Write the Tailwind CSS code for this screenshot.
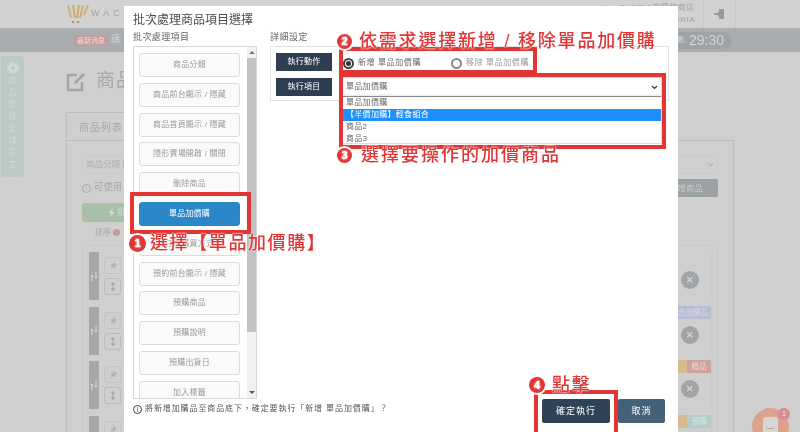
<!DOCTYPE html>
<html lang="zh-Hant">
<head>
<meta charset="UTF-8">
<title>批次處理商品項目選擇</title>
<script src="https://cdn.jsdelivr.net/npm/@tailwindcss/browser@4"></script>
</head>
<body class="m-0 bg-[#cfcfcf]">
<div class="relative w-[800px] h-[432px] overflow-hidden font-['Liberation_Sans','Noto_Sans_CJK_TC',sans-serif] blur-[0.35px]">

  <!-- page behind the modal -->
  <div class="flex flex-col h-full bg-[#cfcfcf]">
    <header class="h-[28px] flex items-center bg-[#d2d2d2] pl-[67px] shrink-0">
      <svg width="22" height="22" viewBox="0 0 22 22" fill="none">
        <path d="M1 2l3 13M6 2l2 13M12 2l-2 13M16 2l-3 13M21 2l-4 10" stroke="#cfae72" stroke-width="2"/>
        <circle cx="6" cy="19" r="1.2" fill="#c98a6f"/><circle cx="11" cy="19" r="1.2" fill="#c98a6f"/>
      </svg>
      <span class="ml-[2px] text-[9px] tracking-[4px] text-[#a2a2a2]">WACA</span>
      <div class="ml-auto flex items-center h-full">
        <div class="w-[18px] h-[18px] rounded-full border border-[#c2c2c2] mr-[6px]"></div>
        <div class="w-[84px] text-[8px] leading-[12px] text-[#a2a2a2] tracking-[0.5px]">
          <div>GLORIA的購物商店</div>
          <div class="text-right pr-[8px]">GLORIA</div>
        </div>
        <div class="w-[32px] h-full border-l border-[#c9c9c9] flex items-center justify-center">
          <svg width="11" height="12" viewBox="0 0 11 12"><path d="M5 1h5v10H5zM0 5h4V3l3 3-3 3V7H0z" fill="#9a9a9a"/></svg>
        </div>
        <div class="w-[65px] h-full border-l border-[#c9c9c9]"></div>
      </div>
    </header>
    <div class="h-[24px] bg-[#a9adb0] flex items-center pl-[74px] shrink-0">
      <span class="h-[11px] w-[34px] rounded-[2px] bg-[#c99a9a] text-[7px] leading-[11px] text-center text-[#e6dede]">最新消息</span>
      <span class="ml-[3px] text-[9px] text-[#d8d8d8]">請</span>
      <div class="ml-auto mr-[68px] h-[17px] w-[70px] rounded-full bg-[#9fa3a6] flex items-center justify-end pr-[8px] text-[#d4d6d7]">
        <span class="text-[7px] mr-[3px]">數:</span>
        <span class="text-[14px] leading-none">29:30</span>
      </div>
    </div>
    <div class="flex flex-1 min-h-0">
      <aside class="ml-px mt-[4px] w-[23px] h-[121px] rounded-r-[3px] bg-[#bccac6] flex flex-col items-center pt-[6px] text-[#d0dbd8] text-[8px] leading-[12px] shrink-0">
        <svg width="12" height="12" viewBox="0 0 12 12" class="mb-[1px]"><circle cx="6" cy="6" r="3.5" fill="none" stroke="#d0dbd8" stroke-width="3"/><circle cx="6" cy="6" r="5.6" fill="none" stroke="#d0dbd8" stroke-width="1.2" stroke-dasharray="1.8 1.8"/></svg>
        <span>商</span><span>品</span><span>登</span><span>錄</span><span>全</span><span>域</span><span>設</span><span>定</span>
      </aside>
      <main class="ml-[42px] w-[668px] flex flex-col">
        <div class="h-[60px] pt-[18px] flex items-start shrink-0">
          <svg width="21" height="21" viewBox="0 0 21 21" fill="none" class="mt-px"><path d="M16 11v8H2V4h9" stroke="#a3a5a7" stroke-width="2.4"/><path d="M8 13l1-3 8-8 2 2-8 8z" fill="#a3a5a7"/></svg>
          <span class="ml-[9px] text-[19px] leading-[22px] tracking-[1px] text-[#a8a8a8]">商品</span>
        </div>
        <div class="h-[28px] w-[260px] border-l border-t border-[#bdbdbd] pl-[12px] pt-[7px] text-[10px] tracking-[1px] text-[#a8a8a8] shrink-0">商品列表</div>
        <section class="flex-1 border border-[#bdbdbd] border-b-0 px-[15px] pt-[14px] flex flex-col">
          <div class="h-[19px] shrink-0 border border-[#c8c8c8] flex items-center justify-between pl-[3px] pr-[3px] text-[8.5px] text-[#adadad]">
            <span>商品分類 (</span>
            <svg width="7" height="5" viewBox="0 0 7 5" fill="none"><path d="M1 1l2.5 3L6 1" stroke="#a8a8a8"/></svg>
          </div>
          <div class="h-[18px] shrink-0 mt-[5px] flex items-center justify-between">
            <span class="flex items-center text-[9px] tracking-[0.5px] text-[#a8a8a8]">
              <span class="w-[9px] h-[9px] rounded-full border border-[#a8a8a8] text-[6px] leading-[7px] text-center mr-[3px]">i</span>可使用
            </span>
            <span class="w-[60px] h-[18px] rounded-[2px] bg-[#9ba0a3] text-[8.5px] leading-[18px] text-right pr-[15px] text-[#c9cccd]">增商品</span>
          </div>
          <div class="h-[19px] w-[60px] shrink-0 mt-[6px] rounded-[3px] bg-[#a9bfa9] flex items-center pl-[26px] text-[9px] text-[#d3ddd3]">
            <svg width="7" height="9" viewBox="0 0 7 9" class="mr-[2px]"><path d="M5 0L0 5h3L2 9l5-5H4z" fill="#d3ddd3"/></svg>批
          </div>
          <div class="h-[16px] shrink-0 mt-[3px] pl-[13px] text-[8px] leading-[16px] text-[#a8a8a8]">排序 <span class="inline-block w-[7px] h-[7px] rounded-full bg-[#c99a9a] align-[-0.5px]"></span></div>
          <div class="mt-[4px] border border-[#c9c9c9] pl-[6px] pr-[5px] pt-[6px] flex flex-col gap-[6.7px]">
            <div class="relative h-[48px] flex items-center gap-[5px] border-r border-[#cacaca]">
              <div class="w-[10px] h-full bg-[#a5a8aa] flex items-center justify-center">
                <svg width="8" height="9" viewBox="0 0 8 9" fill="none" stroke="#d6d6d6"><path d="M2 3v6M0.5 4.5L2 3l1.500 1.500M6 0v6M4.500 4.500L6 6l1.500-1.500"/></svg>
              </div>
              <div class="flex flex-col gap-[4px]">
                <div class="w-[17px] h-[17px] border border-[#c4c4c4] rounded-[3px] flex items-center justify-center">
                  <svg width="9" height="9" viewBox="0 0 9 9"><path d="M5 0l4 4-1 .5-1.500 1.500V8L4.500 6 1 9l3-3.500-2-2h2L5.500 2z" fill="#b4b4b4"/></svg>
                </div>
                <div class="w-[17px] h-[17px] border border-[#bcbcbc] rounded-[3px] flex items-center justify-center">
                  <svg width="6" height="9" viewBox="0 0 6 9"><path d="M3 0l2.500 2.500h-2v4h2L3 9 .5 6.500h2v-4h-2z" fill="#a4a4a4"/></svg>
                </div>
              </div>
              <div class="ml-auto mr-[12px] mt-[8px] w-[18px] h-[18px] rounded-full bg-[#a2a5a7] text-[#d6d6d6] text-[9px] leading-[18px] text-center font-bold">✕</div>
            </div>
            <div class="relative h-[48px] flex items-center gap-[5px] border-r border-[#cacaca]">
              <div class="w-[10px] h-full bg-[#a5a8aa] flex items-center justify-center">
                <svg width="8" height="9" viewBox="0 0 8 9" fill="none" stroke="#d6d6d6"><path d="M2 3v6M0.5 4.5L2 3l1.500 1.500M6 0v6M4.500 4.500L6 6l1.500-1.500"/></svg>
              </div>
              <div class="flex flex-col gap-[4px]">
                <div class="w-[17px] h-[17px] border border-[#c4c4c4] rounded-[3px] flex items-center justify-center">
                  <svg width="9" height="9" viewBox="0 0 9 9"><path d="M5 0l4 4-1 .5-1.500 1.500V8L4.500 6 1 9l3-3.500-2-2h2L5.500 2z" fill="#b4b4b4"/></svg>
                </div>
                <div class="w-[17px] h-[17px] border border-[#bcbcbc] rounded-[3px] flex items-center justify-center">
                  <svg width="6" height="9" viewBox="0 0 6 9"><path d="M3 0l2.500 2.500h-2v4h2L3 9 .5 6.500h2v-4h-2z" fill="#a4a4a4"/></svg>
                </div>
              </div>
              <div class="ml-auto mr-[12px] mt-[8px] w-[18px] h-[18px] rounded-full bg-[#a2a5a7] text-[#d6d6d6] text-[9px] leading-[18px] text-center font-bold">✕</div>
              <span class="absolute right-0 -top-[1px] w-[40px] h-[13px] bg-[#b9bdd4] text-[7.5px] leading-[13px] text-right pr-[3px] text-[#d5d7e4]">合加購品</span>
            </div>
            <div class="relative h-[48px] flex items-center gap-[5px] border-r border-[#cacaca]">
              <div class="w-[10px] h-full bg-[#a5a8aa] flex items-center justify-center">
                <svg width="8" height="9" viewBox="0 0 8 9" fill="none" stroke="#d6d6d6"><path d="M2 3v6M0.5 4.5L2 3l1.500 1.500M6 0v6M4.500 4.500L6 6l1.500-1.500"/></svg>
              </div>
              <div class="flex flex-col gap-[4px]">
                <div class="w-[17px] h-[17px] border border-[#c4c4c4] rounded-[3px] flex items-center justify-center">
                  <svg width="9" height="9" viewBox="0 0 9 9"><path d="M5 0l4 4-1 .5-1.500 1.500V8L4.500 6 1 9l3-3.500-2-2h2L5.500 2z" fill="#b4b4b4"/></svg>
                </div>
                <div class="w-[17px] h-[17px] border border-[#bcbcbc] rounded-[3px] flex items-center justify-center">
                  <svg width="6" height="9" viewBox="0 0 6 9"><path d="M3 0l2.500 2.500h-2v4h2L3 9 .5 6.500h2v-4h-2z" fill="#a4a4a4"/></svg>
                </div>
              </div>
              <div class="ml-auto mr-[12px] mt-[8px] w-[18px] h-[18px] rounded-full bg-[#a2a5a7] text-[#d6d6d6] text-[9px] leading-[18px] text-center font-bold">✕</div>
              <span class="absolute right-0 -top-[1px] flex h-[13px] text-[7.5px] leading-[13px] text-center text-[#e2dcd6]">
                <span class="w-[10px] bg-[#d6bb8f]"></span><span class="w-[24px] bg-[#cfa39b]">贈品</span>
              </span>
            </div>
            <div class="relative h-[48px] flex items-center gap-[5px] border-r border-[#cacaca]">
              <div class="w-[10px] h-full bg-[#a5a8aa]"></div>
              <div class="self-start mt-[5px] w-[17px] h-[17px] border border-[#c4c4c4] rounded-[3px] flex items-center justify-center">
                <svg width="9" height="9" viewBox="0 0 9 9"><path d="M5 0l4 4-1 .5-1.500 1.500V8L4.500 6 1 9l3-3.500-2-2h2L5.500 2z" fill="#b4b4b4"/></svg>
              </div>
              <span class="absolute right-0 -top-[1px] flex h-[13px] text-[7.5px] leading-[13px] text-center text-[#d7e2de]">
                <span class="w-[10px] bg-[#d6bb8f]"></span><span class="w-[24px] bg-[#b4cdc8]">預購</span>
              </span>
            </div>
          </div>
        </section>
      </main>
    </div>
  </div>

  <!-- chat bubble -->
  <div class="absolute left-[752px] top-[408px] w-[37px] h-[37px] rounded-full bg-[#dda28e] flex justify-center pt-[9px]">
    <div class="w-[15px] h-[18px] rounded-[3px] bg-[#d6d6d6] flex justify-center pt-[9px]">
      <div class="w-[9px] h-[3px] border-b border-[#c99a8a] rounded-b-full"></div>
    </div>
  </div>
  <div class="absolute left-[778px] top-[408px] w-[12px] h-[12px] rounded-full bg-[#d98c94] text-[7px] leading-[12px] text-center text-[#eee]">1</div>

  <!-- modal -->
  <div class="absolute left-[124px] top-[6px] w-[554px] h-[426px] bg-white px-[9px] flex flex-col">
    <h2 class="mt-[6px] h-[16px] text-[12px] leading-[16px] font-normal text-[#4d4d4d]">批次處理商品項目選擇</h2>
    <div class="flex flex-1 min-h-0 mt-[1px]">
      <div class="w-[124px] shrink-0 flex flex-col">
        <div class="h-[17px] text-[9px] leading-[17px] tracking-[0.4px] text-[#666]">批次處理項目</div>
        <div class="h-[353px] border border-[#d8d8d8] bg-white flex overflow-hidden">
          <div class="w-[112px] pl-[5px] pt-[6px] flex flex-col gap-[5.8px]">
            <div class="h-[24px] w-[101px] shrink-0 rounded-[3px] border border-[#dcdcdc] bg-[#fafafa] text-[8px] leading-[22px] text-center text-[#999] tracking-[0.2px]">商品分類</div>
            <div class="h-[24px] w-[101px] shrink-0 rounded-[3px] border border-[#dcdcdc] bg-[#fafafa] text-[8px] leading-[22px] text-center text-[#999] tracking-[0.2px]">商品前台顯示 / 隱藏</div>
            <div class="h-[24px] w-[101px] shrink-0 rounded-[3px] border border-[#dcdcdc] bg-[#fafafa] text-[8px] leading-[22px] text-center text-[#999] tracking-[0.2px]">商品首頁顯示 / 隱藏</div>
            <div class="h-[24px] w-[101px] shrink-0 rounded-[3px] border border-[#dcdcdc] bg-[#fafafa] text-[8px] leading-[22px] text-center text-[#999] tracking-[0.2px]">隱形賣場開啟 / 關閉</div>
            <div class="h-[24px] w-[101px] shrink-0 rounded-[3px] border border-[#dcdcdc] bg-[#fafafa] text-[8px] leading-[22px] text-center text-[#999] tracking-[0.2px]">刪除商品</div>
            <div class="h-[24px] w-[101px] shrink-0 rounded-[3px] border border-[#2a86c4] bg-[#2b88c8] text-[8px] leading-[22px] text-center text-white tracking-[0.2px]">單品加價購</div>
            <div class="h-[24px] w-[101px] shrink-0 rounded-[3px] border border-[#dcdcdc] bg-[#fafafa] text-[8px] leading-[22px] text-center text-[#999] tracking-[0.2px]">任選購買方式</div>
            <div class="h-[24px] w-[101px] shrink-0 rounded-[3px] border border-[#dcdcdc] bg-[#fafafa] text-[8px] leading-[22px] text-center text-[#999] tracking-[0.2px]">預約前台顯示 / 隱藏</div>
            <div class="h-[24px] w-[101px] shrink-0 rounded-[3px] border border-[#dcdcdc] bg-[#fafafa] text-[8px] leading-[22px] text-center text-[#999] tracking-[0.2px]">預購商品</div>
            <div class="h-[24px] w-[101px] shrink-0 rounded-[3px] border border-[#dcdcdc] bg-[#fafafa] text-[8px] leading-[22px] text-center text-[#999] tracking-[0.2px]">預購說明</div>
            <div class="h-[24px] w-[101px] shrink-0 rounded-[3px] border border-[#dcdcdc] bg-[#fafafa] text-[8px] leading-[22px] text-center text-[#999] tracking-[0.2px]">預購出貨日</div>
            <div class="h-[24px] w-[101px] shrink-0 rounded-[3px] border border-[#dcdcdc] bg-[#fafafa] text-[8px] leading-[22px] text-center text-[#999] tracking-[0.2px]">加入標籤</div>
          </div>
          <!-- scrollbar -->
          <div class="w-[9px] ml-auto h-full bg-[#f1f1f1] flex flex-col items-center">
            <div class="h-[11px] flex items-center"><div class="w-0 h-0 border-x-[3px] border-x-transparent border-b-[3px] border-b-[#777]"></div></div>
            <div class="h-[274px] w-full bg-[#c1c1c1]"></div>
            <div class="mt-auto h-[11px] flex items-center"><div class="w-0 h-0 border-x-[3px] border-x-transparent border-t-[3px] border-t-[#555]"></div></div>
          </div>
        </div>
        <div class="mt-[4px] w-[300px] flex items-center text-[8px] tracking-[0.9px] text-[#555] whitespace-nowrap">
          <span class="w-[9px] h-[9px] rounded-full border border-[#444] text-[7px] leading-[7px] text-center text-[#444] mr-[3px] shrink-0 tracking-normal">i</span>
          <span>將新增加購品至商品底下，確定要執行「新增 單品加價購」？</span>
        </div>
      </div>
      <div class="ml-[13px] w-[399px] flex flex-col">
        <div class="h-[17px] text-[9px] leading-[17px] tracking-[0.5px] text-[#666]">詳細設定</div>
        <div class="h-[55px] border border-[#e3e3e3] flex">
          <div class="pl-[5px] pt-[6px] flex flex-col gap-[7px] w-[72px] shrink-0">
            <div class="w-[56px] h-[18px] bg-[#2c3e50] text-[8px] leading-[18px] text-center text-white tracking-[0.3px]">執行動作</div>
            <div class="w-[56px] h-[18px] bg-[#2c3e50] text-[8px] leading-[18px] text-center text-white tracking-[0.3px]">執行項目</div>
          </div>
          <div class="flex-1">
            <div class="h-[32px] flex items-center text-[8px] tracking-[0.6px]">
              <span class="w-[11px] h-[11px] rounded-full border-2 border-[#444] flex items-center justify-center mr-[4px]"><span class="w-[5px] h-[5px] rounded-full bg-[#333]"></span></span>
              <span class="text-[#666]">新增 單品加價購</span>
              <span class="w-[11px] h-[11px] rounded-full border-2 border-[#888] ml-[30px] mr-[4px]"></span>
              <span class="text-[#999]">移除 單品加價購</span>
            </div>
          </div>
        </div>
      </div>
    </div>
    <div class="absolute right-[13px] bottom-[9px] flex gap-[8px]">
      <div class="w-[68px] h-[24px] rounded-[2px] bg-[#2f4358] text-[9px] leading-[24px] text-center text-white tracking-[1px]">確定執行</div>
      <div class="w-[47px] h-[24px] rounded-[2px] bg-[#456178] text-[9px] leading-[24px] text-center text-white tracking-[1px]">取消</div>
    </div>
  </div>

  <!-- open select over the modal -->
  <div class="absolute left-[342px] top-[77px] w-[320px] h-[67px] bg-white border border-[#ddd] text-[8px] text-[#666] tracking-[0.3px]">
    <div class="h-[19px] border-b border-[#888] shadow-[0_-1px_2px_#e5e5e5_inset] flex items-center justify-between pl-[3px] pr-[3px] leading-none">
      <span>單品加價購</span>
      <svg width="7" height="5" viewBox="0 0 7 5" fill="none"><path d="M1 1l2.5 2.5L6 1" stroke="#333" stroke-width="1.1"/></svg>
    </div>
    <div class="h-[12px] leading-[12px] pl-[3px]">單品加價購</div>
    <div class="h-[12px] leading-[12px] pl-[3px] bg-[#1e90ff] text-white">【半價加購】輕食組合</div>
    <div class="h-[12px] leading-[12px] pl-[3px]">商品2</div>
    <div class="h-[12px] leading-[12px] pl-[3px]">商品3</div>
  </div>

  <!-- red annotation frames -->
  <div class="absolute left-[130px] top-[192px] w-[121px] h-[42px] border-[4px] border-[#e33535]"></div>
  <div class="absolute left-[339px] top-[47px] w-[198px] h-[27px] border-[4px] border-[#e33535]"></div>
  <div class="absolute left-[339px] top-[73px] w-[327px] h-[76px] border-[4px] border-[#e33535]"></div>
  <div class="absolute left-[534px] top-[390px] w-[84px] h-[48px] border-[4px] border-[#e33535]"></div>

  <!-- annotation labels -->
  <div class="absolute left-[129px] top-[231px] flex items-center text-[18px] leading-[24px] font-medium tracking-[1.6px] text-[#e33535] whitespace-nowrap [text-shadow:0_0_2px_white,0_0_2px_white]">
    <span class="w-[17px] h-[17px] rounded-full bg-[#e33535] ring-2 ring-white text-white text-[11px] leading-[17px] text-center font-bold tracking-normal mr-[4px]">1</span>選擇【單品加價購】
  </div>
  <div class="absolute left-[337px] top-[29px] flex items-center text-[18px] leading-[24px] font-medium tracking-[1.8px] text-[#e33535] whitespace-nowrap [text-shadow:0_0_2px_white,0_0_2px_white]">
    <span class="w-[15px] h-[15px] rounded-full bg-[#e33535] ring-2 ring-white text-white text-[11px] leading-[15px] text-center font-bold tracking-normal mr-[7px]">2</span>依需求選擇新增 / 移除單品加價購
  </div>
  <div class="absolute left-[337px] top-[143px] flex items-center text-[18px] leading-[24px] font-medium tracking-[2px] text-[#e33535] whitespace-nowrap [text-shadow:0_0_2px_white,0_0_2px_white]">
    <span class="w-[15px] h-[15px] rounded-full bg-[#e33535] ring-2 ring-white text-white text-[11px] leading-[15px] text-center font-bold tracking-normal mr-[9px]">3</span>選擇要操作的加價商品
  </div>
  <div class="absolute left-[529px] top-[373px] flex items-center text-[18px] leading-[24px] font-medium tracking-[1.5px] text-[#e33535] whitespace-nowrap [text-shadow:0_0_2px_white,0_0_2px_white]">
    <span class="w-[16px] h-[16px] rounded-full bg-[#e33535] ring-2 ring-white text-white text-[11px] leading-[16px] text-center font-bold tracking-normal mr-[7px]">4</span>點擊
  </div>
</div>
</body>
</html>
